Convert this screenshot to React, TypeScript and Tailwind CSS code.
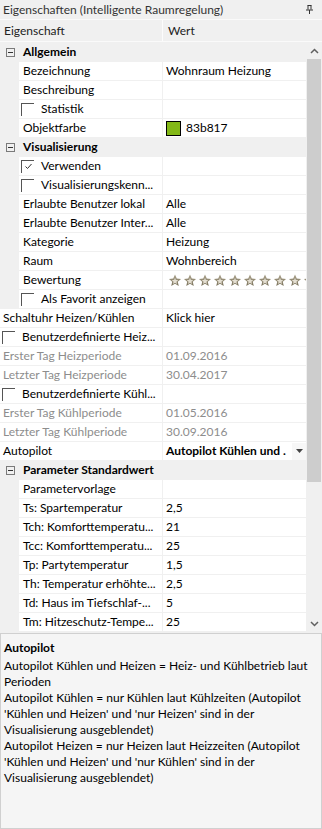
type RowKind = 'cat' | 'sub' | 'top';

interface Row {
  kind: RowKind;
  name: string;
  value?: string;
  check?: 'on' | 'off';
  disabled?: boolean;
  color?: string;
  stars?: boolean;
  dropdown?: boolean;
}

const rows: Row[] = [
  { kind: 'cat', name: 'Allgemein' },
  { kind: 'sub', name: 'Bezeichnung', value: 'Wohnraum Heizung' },
  { kind: 'sub', name: 'Beschreibung', value: '' },
  { kind: 'sub', name: 'Statistik', check: 'off' },
  { kind: 'sub', name: 'Objektfarbe', value: '83b817', color: '#83b817' },
  { kind: 'cat', name: 'Visualisierung' },
  { kind: 'sub', name: 'Verwenden', check: 'on' },
  { kind: 'sub', name: 'Visualisierungskenn...', check: 'off' },
  { kind: 'sub', name: 'Erlaubte Benutzer lokal', value: 'Alle' },
  { kind: 'sub', name: 'Erlaubte Benutzer Inter...', value: 'Alle' },
  { kind: 'sub', name: 'Kategorie', value: 'Heizung' },
  { kind: 'sub', name: 'Raum', value: 'Wohnbereich' },
  { kind: 'sub', name: 'Bewertung', stars: true },
  { kind: 'sub', name: 'Als Favorit anzeigen', check: 'off' },
  { kind: 'top', name: 'Schaltuhr Heizen/Kühlen', value: 'Klick hier' },
  { kind: 'top', name: 'Benutzerdefinierte Heiz...', check: 'off' },
  { kind: 'top', name: 'Erster Tag Heizperiode', value: '01.09.2016', disabled: true },
  { kind: 'top', name: 'Letzter Tag Heizperiode', value: '30.04.2017', disabled: true },
  { kind: 'top', name: 'Benutzerdefinierte Kühl...', check: 'off' },
  { kind: 'top', name: 'Erster Tag Kühlperiode', value: '01.05.2016', disabled: true },
  { kind: 'top', name: 'Letzter Tag Kühlperiode', value: '30.09.2016', disabled: true },
  { kind: 'top', name: 'Autopilot', value: 'Autopilot Kühlen und .', dropdown: true },
  { kind: 'cat', name: 'Parameter Standardwert' },
  { kind: 'sub', name: 'Parametervorlage', value: '' },
  { kind: 'sub', name: 'Ts: Spartemperatur', value: '2,5' },
  { kind: 'sub', name: 'Tch: Komforttemperatu...', value: '21' },
  { kind: 'sub', name: 'Tcc: Komforttemperatu...', value: '25' },
  { kind: 'sub', name: 'Tp: Partytemperatur', value: '1,5' },
  { kind: 'sub', name: 'Th: Temperatur erhöhte...', value: '2,5' },
  { kind: 'sub', name: 'Td: Haus im Tiefschlaf-...', value: '5' },
  { kind: 'sub', name: 'Tm: Hitzeschutz-Tempe...', value: '25' },
];

const descLines = [
  'Autopilot Kühlen und Heizen = Heiz- und Kühlbetrieb laut',
  'Perioden',
  'Autopilot Kühlen = nur Kühlen laut Kühlzeiten (Autopilot',
  "'Kühlen und Heizen' und 'nur Heizen' sind in der",
  'Visualisierung ausgeblendet)',
  'Autopilot Heizen = nur Heizen laut Heizzeiten (Autopilot',
  "'Kühlen und Heizen' und 'nur Kühlen' sind in der",
  'Visualisierung ausgeblendet)',
];

function ExpandBox() {
  return (
    <svg width="9" height="9" viewBox="0 0 9 9" className="shrink-0">
      <rect x="0.5" y="0.5" width="8" height="8" fill="none" stroke="#7a7a7a" />
      <path d="M2 4.5h5" stroke="#333" />
    </svg>
  );
}

function CheckBox({ on }: { on: boolean }) {
  return (
    <div className="w-[13px] h-[13px] shrink-0 border-l border-t border-[#555] flex items-center justify-center">
      {on && (
        <svg width="9" height="9" viewBox="0 0 9 9">
          <path d="M1.5 4.5l2 2 4-4.5" fill="none" stroke="#333" strokeWidth="1" />
        </svg>
      )}
    </div>
  );
}

function Star() {
  return (
    <svg width="14" height="13" viewBox="0 0 24 23" className="shrink-0">
      <defs>
        <linearGradient id="sg" x1="0" y1="0" x2="0" y2="1">
          <stop offset="0" stopColor="#a89f88" />
          <stop offset="1" stopColor="#7d755f" />
        </linearGradient>
      </defs>
      <path
        d="M12 1l3.1 7 7.6.7-5.8 5 1.8 7.5L12 17.3 5.3 21.2l1.8-7.5-5.8-5 7.6-.7z"
        fill="url(#sg)"
      />
      <path
        d="M12 6.5l1.6 3.9 4.1.4-3.1 2.7.9 4L12 15.4 8.5 17.5l.9-4-3.1-2.7 4.1-.4z"
        fill="#e4dfd2"
      />
    </svg>
  );
}

function GridRow({ row }: { row: Row }) {
  if (row.kind === 'cat') {
    return (
      <div className="h-[19px] flex items-center bg-[#f0f0f0] border-b border-[#f0f0f0]">
        <div className="w-[19px] flex justify-center pl-[1px]">
          <ExpandBox />
        </div>
        <span className="pl-[4px] font-bold text-black">{row.name}</span>
      </div>
    );
  }

  const textColor = row.disabled ? 'text-[#8d8d8d]' : 'text-black';

  return (
    <div className="h-[19px] flex border-b border-[#f0f0f0]">
      {row.kind === 'sub' && <div className="w-[19px] shrink-0 bg-[#f0f0f0]" />}
      <div
        className={
          (row.kind === 'sub' ? 'w-[143px] pl-[4px]' : 'w-[162px] pl-[3px]') +
          ' shrink-0 bg-white flex items-center overflow-hidden whitespace-nowrap ' +
          textColor
        }
      >
        {row.check ? (
          <div className={(row.kind === 'sub' ? 'ml-[-2px]' : 'ml-[-1px]') + ' flex items-center gap-[7px]'}>
            <CheckBox on={row.check === 'on'} />
            <span>{row.name}</span>
          </div>
        ) : (
          row.name
        )}
      </div>
      <div
        className={
          'flex-1 bg-white border-l border-[#f0f0f0] flex items-center pl-[3px] overflow-hidden whitespace-nowrap ' +
          textColor
        }
      >
        {row.color && (
          <div className="w-[15px] h-[15px] mr-[5px] border border-black" style={{ background: row.color }} />
        )}
        {row.stars ? (
          <div className="flex gap-[1px] pl-[2px]">
            {Array.from({ length: 10 }).map((_, i) => (
              <Star key={i} />
            ))}
          </div>
        ) : row.dropdown ? (
          <div className="flex-1 flex items-center justify-between">
            <span className="font-bold text-black">{row.value}</span>
            <div className="w-[14px] h-[17px] bg-[#f7f7f7] flex items-center justify-center">
              <svg width="7" height="4" viewBox="0 0 7 4">
                <path d="M0 0h7L3.5 4z" fill="#444" />
              </svg>
            </div>
          </div>
        ) : (
          row.value
        )}
      </div>
    </div>
  );
}

export default function App() {
  return (
    <div
      className="w-[322px] h-[829px] bg-[#f0f0f0] flex flex-col text-[12px] overflow-hidden"
      style={{ fontFamily: 'Lato, "Noto Sans", sans-serif' }}
    >
      {/* title */}
      <div className="h-[19px] flex items-center justify-between pl-[3px] pr-[9px] text-[#333]">
        <span className="whitespace-nowrap">Eigenschaften (Intelligente Raumregelung)</span>
        <svg width="7" height="9" viewBox="0 0 7 9">
          <path d="M1.5 0.5h4M2 0.5v4M5 0.5v4M0 5h7M3.5 5v4" stroke="#333" fill="none" />
        </svg>
      </div>

      {/* header */}
      <div className="h-[23px] flex items-center bg-[#f0f0f0] border-t border-[#fafafa] border-b border-[#e3e3e3] text-[#222]">
        <div className="w-[162px] pl-[4px]">Eigenschaft</div>
        <div className="flex-1 h-full flex items-center border-l border-[#fcfcfc] pl-[5px]">Wert</div>
      </div>

      <div className="h-[1px]" />

      {/* grid */}
      <div className="h-[589px] flex">
        <div className="w-[306px] flex flex-col overflow-hidden">
          {rows.map((r, i) => (
            <GridRow key={i} row={r} />
          ))}
        </div>
        <div className="w-[16px] flex flex-col bg-[#f0f0f0]">
          <div className="h-[16px] flex items-center justify-center">
            <svg width="9" height="6" viewBox="0 0 9 6">
              <path d="M1 5l3.5-3.5L8 5" fill="none" stroke="#606060" strokeWidth="1.5" />
            </svg>
          </div>
          <div className="h-[423px] mx-[1px] bg-[#cdcdcd]" />
          <div className="flex-1" />
          <div className="h-[16px] flex items-center justify-center">
            <svg width="9" height="6" viewBox="0 0 9 6">
              <path d="M1 1l3.5 3.5L8 1" fill="none" stroke="#606060" strokeWidth="1.5" />
            </svg>
          </div>
        </div>
      </div>

      {/* description */}
      <div className="flex-1 mt-[1px] border border-[#d0d0d0] bg-[#f5f5f5] px-[3px] pt-[5px] text-black whitespace-nowrap">
        <div className="font-bold leading-[17px] mb-[2px]">Autopilot</div>
        {descLines.map((l, i) => (
          <div key={i} className="leading-[16px]">
            {l}
          </div>
        ))}
      </div>
    </div>
  );
}
